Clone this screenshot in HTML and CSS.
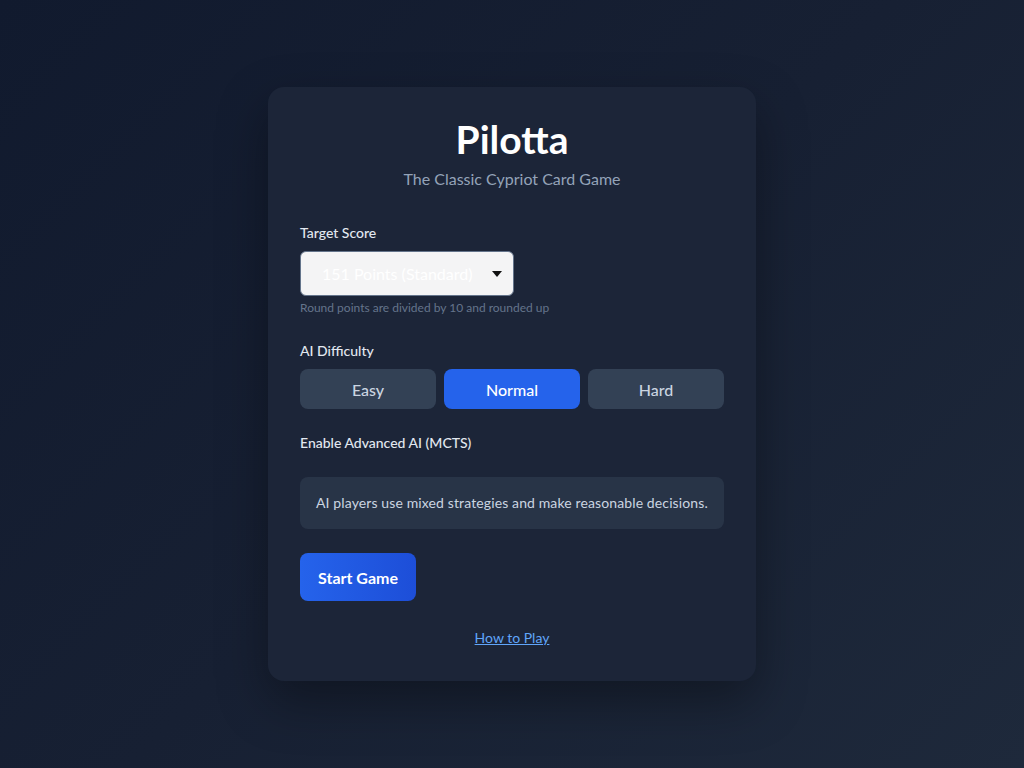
FILE: index.html
```html
<!DOCTYPE html>
<html lang="en">
<head>
<meta charset="utf-8">
<title>Pilotta</title>
<link rel="stylesheet" href="styles.css">
</head>
<body>
<main class="page">
  <section class="card">
    <h1 class="title">Pilotta</h1>
    <p class="subtitle">The Classic Cypriot Card Game</p>

    <div class="field field-score">
      <label class="label" for="score">Target Score</label>
      <div class="select-wrap">
        <select id="score" class="select">
          <option>151 Points (Standard)</option>
        </select>
        <svg class="caret" width="10" height="6" viewBox="0 0 10 6"><path d="M0 0h10L5 6z" fill="#111"/></svg>
      </div>
      <p class="hint">Round points are divided by 10 and rounded up</p>
    </div>

    <div class="field field-diff">
      <div class="label">AI Difficulty</div>
      <div class="diff-group">
        <button class="diff">Easy</button>
        <button class="diff active">Normal</button>
        <button class="diff">Hard</button>
      </div>
    </div>

    <div class="field field-mcts">
      <div class="label">Enable Advanced AI (MCTS)</div>
    </div>

    <div class="info">AI players use mixed strategies and make reasonable decisions.</div>

    <button class="start">Start Game</button>

    <div class="footer"><a href="#" class="link">How to Play</a></div>
  </section>
</main>
</body>
</html>
```

FILE: styles.css
```css
* { box-sizing: border-box; }
html, body { margin: 0; height: 100%; }
body {
  font-family: Lato, "Noto Sans", sans-serif;
  background: linear-gradient(135deg, #111a2e 0%, #172033 50%, #1e293b 100%);
  color: #e2e8f0;
}
.page {
  min-height: 768px;
  display: flex;
  align-items: flex-start;
  justify-content: center;
  padding-top: 87px;
}
.card {
  width: 488px;
  height: 594px;
  background: #1c2538;
  border-radius: 16px;
  padding: 32px;
  box-shadow: 0 20px 50px rgba(0,0,0,0.35);
  display: flex;
  flex-direction: column;
}
.title {
  margin: 0;
  text-align: center;
  font-size: 39px;
  font-weight: 700;
  line-height: 40px;
  color: #ffffff;
}
.subtitle {
  margin: 8px 0 0;
  text-align: center;
  font-size: 16px;
  line-height: 24px;
  color: #94a3b8;
}
.field-score { margin-top: 32px; }
.label {
  display: block;
  font-size: 14px;
  font-weight: 500;
  line-height: 20px;
  color: #e2e8f0;
}
.select-wrap {
  position: relative;
  width: 214px;
  margin-top: 8px;
}
.select {
  appearance: none;
  -webkit-appearance: none;
  width: 214px;
  height: 45px;
  background: #f4f4f5;
  border: 1px solid #64748b;
  border-radius: 6px;
  color: #ffffff;
  font-family: inherit;
  font-size: 16px;
  padding: 0 36px 0 21px;
}
.caret {
  position: absolute;
  right: 12px;
  top: 20px;
}
.hint {
  margin: 4px 0 0;
  font-size: 12px;
  line-height: 16px;
  color: #64748b;
}
.field-diff { margin-top: 25px; }
.diff-group {
  display: grid;
  grid-template-columns: 1fr 1fr 1fr;
  gap: 8px;
  margin-top: 8px;
}
.diff {
  height: 40px;
  border: 0;
  border-radius: 8px;
  background: #334155;
  color: #cbd5e1;
  font-family: inherit;
  font-size: 16px;
  font-weight: 500;
}
.diff.active { background: #2563eb; color: #ffffff; }
.field-mcts { margin-top: 24px; }
.info {
  margin-top: 24px;
  background: #283447;
  border-radius: 8px;
  padding: 16px;
  font-size: 14px;
  line-height: 20px;
  letter-spacing: 0.12px;
  color: #cbd5e1;
}
.start {
  align-self: flex-start;
  margin-top: 24px;
  height: 48px;
  padding: 0 18px;
  border: 0;
  border-radius: 8px;
  background: linear-gradient(90deg, #2563eb, #1d4ed8);
  color: #ffffff;
  font-family: inherit;
  font-size: 16px;
  font-weight: 700;
}
.footer {
  margin-top: 26px;
  text-align: center;
}
.link {
  font-size: 14px;
  color: #60a5fa;
  text-decoration: underline;
}
```
